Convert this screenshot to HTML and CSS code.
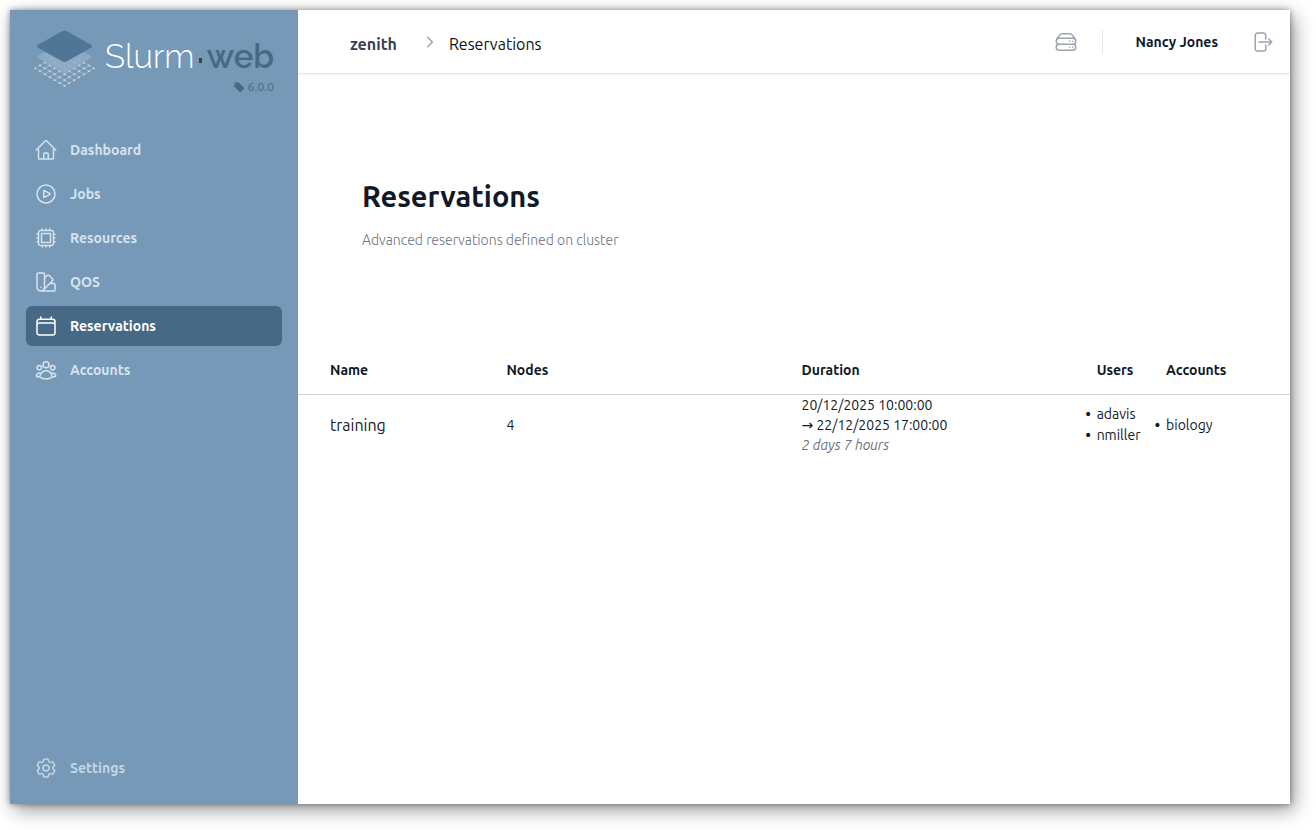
FILE: index.html
```html
<!DOCTYPE html>
<html lang="en">
<head>
<meta charset="utf-8">
<title>Slurm-web - Reservations</title>
<meta name="viewport" content="width=device-width, initial-scale=1">
<link rel="stylesheet" href="styles.css">
</head>
<body>
<div class="app">

  <aside class="sidebar">
    <div class="brand">
      <a class="logo" href="#" aria-label="Slurm-web">
        <svg class="logo-mark" viewBox="0 0 62 58" aria-hidden="true">
          <g stroke="#a3b7c8" stroke-width="0.9" fill="none">
            <path d="M1 39 31 57M6 36 36 54M11 33 41 51M16 30 46 48M21 27 51 45M26 24 56 42M31 21 61 39"/>
            <path d="M61 39 31 57M56 36 26 54M51 33 21 51M46 30 16 48M41 27 11 45M36 24 6 42M31 21 1 39"/>
          </g>
          <g stroke="#dddcd8" stroke-width="1.9" stroke-linecap="round" stroke-dasharray="0 5.831">
            <path d="M1 39 31 57.1M6 36 36 54.1M11 33 41 51.1M16 30 46 48.1M21 27 51 45.1M26 24 56 42.1M31 21 61 39.1"/>
          </g>
          <path d="M5 26 29 12q2-1 4 0L57 26q3 2 0 3L33 43q-2 1-4 0L5 29q-3-1 0-3z" fill="#90adc5" opacity=".85"/>
          <path d="M4 15 29 1q2-1 4 0L58 15q2 1 0 3L33 32q-2 1-4 0L4 18q-2-2 0-3z" fill="#507697"/>
        </svg>
        <span class="logo-text"><span class="logo-slurm">Slurm</span><span class="logo-dot"></span><span class="logo-web">web</span></span>
      </a>
      <div class="version">
        <svg viewBox="0 0 20 20" fill="currentColor" aria-hidden="true"><path fill-rule="evenodd" d="M4.5 2A2.5 2.5 0 0 0 2 4.5v3.879a2.5 2.5 0 0 0 .732 1.767l7.5 7.5a2.5 2.5 0 0 0 3.536 0l3.878-3.878a2.5 2.5 0 0 0 0-3.536l-7.5-7.5A2.5 2.5 0 0 0 8.38 2H4.5ZM5 6a1 1 0 1 0 0-2 1 1 0 0 0 0 2Z" clip-rule="evenodd"/></svg>
        6.0.0
      </div>
    </div>

    <nav class="menu">
      <ul>
        <li><a href="#">
          <svg class="icon" viewBox="0 0 24 24" aria-hidden="true"><path d="m2.25 12 8.954-8.955c.44-.439 1.152-.439 1.591 0L21.75 12M4.5 9.75v10.125c0 .621.504 1.125 1.125 1.125H9.75v-4.875c0-.621.504-1.125 1.125-1.125h2.25c.621 0 1.125.504 1.125 1.125V21h4.125c.621 0 1.125-.504 1.125-1.125V9.75M8.25 21h8.25"/></svg>
          Dashboard</a></li>
        <li><a href="#">
          <svg class="icon" viewBox="0 0 24 24" aria-hidden="true"><path d="M21 12a9 9 0 1 1-18 0 9 9 0 0 1 18 0Z"/><path d="M15.91 11.672a.375.375 0 0 1 0 .656l-5.603 3.113a.375.375 0 0 1-.557-.328V8.887c0-.286.307-.466.557-.327l5.603 3.112Z"/></svg>
          Jobs</a></li>
        <li><a href="#">
          <svg class="icon" viewBox="0 0 24 24" aria-hidden="true"><path d="M8.25 3v1.5M4.5 8.25H3m18 0h-1.5M4.5 12H3m18 0h-1.5m-15 3.75H3m18 0h-1.5M8.25 19.5V21M12 3v1.5m0 15V21m3.75-18v1.5m0 15V21m-9-1.5h10.5a2.25 2.25 0 0 0 2.25-2.25V6.75a2.25 2.25 0 0 0-2.25-2.25H6.75A2.25 2.25 0 0 0 4.5 6.75v10.5a2.25 2.25 0 0 0 2.25 2.25Zm.75-12h9v9h-9v-9Z"/></svg>
          Resources</a></li>
        <li><a href="#">
          <svg class="icon" viewBox="0 0 24 24" aria-hidden="true"><path d="M4.098 19.902a3.75 3.75 0 0 0 5.304 0l6.401-6.402M6.75 21A3.75 3.75 0 0 1 3 17.25V4.125C3 3.504 3.504 3 4.125 3h5.25c.621 0 1.125.504 1.125 1.125v4.072M6.75 21a3.75 3.75 0 0 0 3.75-3.75V8.197M6.75 21h13.125c.621 0 1.125-.504 1.125-1.125v-5.25c0-.621-.504-1.125-1.125-1.125h-4.072M10.5 8.197l2.88-2.88c.438-.439 1.15-.439 1.59 0l3.712 3.713c.44.44.44 1.152 0 1.59l-2.879 2.88M6.75 17.25h.008v.008H6.75v-.008Z"/></svg>
          QOS</a></li>
        <li><a class="active" href="#" aria-current="page">
          <svg class="icon" viewBox="0 0 24 24" aria-hidden="true"><path d="M6.75 3v2.25M17.25 3v2.25M3 18.75V7.5a2.25 2.25 0 0 1 2.25-2.25h13.5A2.25 2.25 0 0 1 21 7.5v11.25m-18 0A2.25 2.25 0 0 0 5.25 21h13.5A2.25 2.25 0 0 0 21 18.75m-18 0v-7.5A2.25 2.25 0 0 1 5.25 9h13.5A2.25 2.25 0 0 1 21 11.25v7.5"/></svg>
          Reservations</a></li>
        <li><a href="#">
          <svg class="icon" viewBox="0 0 24 24" aria-hidden="true"><path d="M18 18.72a9.094 9.094 0 0 0 3.741-.479 3 3 0 0 0-4.682-2.72m.94 3.198.001.031c0 .225-.012.447-.037.666A11.944 11.944 0 0 1 12 21c-2.17 0-4.207-.576-5.963-1.584A6.062 6.062 0 0 1 6 18.719m12 0a5.971 5.971 0 0 0-.941-3.197m0 0A5.995 5.995 0 0 0 12 12.75a5.995 5.995 0 0 0-5.058 2.772m0 0a3 3 0 0 0-4.681 2.72 8.986 8.986 0 0 0 3.74.477m.94-3.197a5.971 5.971 0 0 0-.94 3.197M15 6.75a3 3 0 1 1-6 0 3 3 0 0 1 6 0Zm6 3a2.25 2.25 0 1 1-4.5 0 2.25 2.25 0 0 1 4.5 0Zm-13.5 0a2.25 2.25 0 1 1-4.5 0 2.25 2.25 0 0 1 4.5 0Z"/></svg>
          Accounts</a></li>
      </ul>
      <a class="settings" href="#">
        <svg class="icon" viewBox="0 0 24 24" aria-hidden="true"><path d="M9.594 3.94c.09-.542.56-.94 1.11-.94h2.593c.55 0 1.02.398 1.11.94l.213 1.281c.063.374.313.686.645.87.074.04.147.083.22.127.325.196.72.257 1.075.124l1.217-.456a1.125 1.125 0 0 1 1.37.49l1.296 2.247a1.125 1.125 0 0 1-.26 1.431l-1.003.827c-.293.241-.438.613-.43.992a7.723 7.723 0 0 1 0 .255c-.008.378.137.75.43.991l1.004.827c.424.35.534.955.26 1.43l-1.298 2.247a1.125 1.125 0 0 1-1.369.491l-1.217-.456c-.355-.133-.75-.072-1.076.124a6.47 6.47 0 0 1-.22.128c-.331.183-.581.495-.644.869l-.213 1.281c-.09.543-.56.94-1.11.94h-2.594c-.55 0-1.019-.398-1.11-.94l-.213-1.281c-.062-.374-.312-.686-.644-.87a6.52 6.52 0 0 1-.22-.127c-.325-.196-.72-.257-1.076-.124l-1.217.456a1.125 1.125 0 0 1-1.369-.49l-1.297-2.247a1.125 1.125 0 0 1 .26-1.431l1.004-.827c.292-.24.437-.613.43-.991a6.932 6.932 0 0 1 0-.255c.007-.38-.138-.751-.43-.992l-1.004-.827a1.125 1.125 0 0 1-.26-1.43l1.297-2.247a1.125 1.125 0 0 1 1.37-.491l1.216.456c.356.133.751.072 1.076-.124.072-.044.146-.086.22-.128.332-.183.582-.495.644-.869l.214-1.28Z"/><path d="M15 12a3 3 0 1 1-6 0 3 3 0 0 1 6 0Z"/></svg>
        Settings</a>
    </nav>
  </aside>

  <div class="content">
    <header class="topbar">
      <nav class="breadcrumb" aria-label="Breadcrumb">
        <a class="cluster" href="#">zenith</a>
        <svg class="chevron" viewBox="0 0 20 20" aria-hidden="true"><path d="M7.7 5.3 12.3 10l-4.6 4.7"/></svg>
        <span>Reservations</span>
      </nav>
      <div class="user">
        <button type="button" aria-label="Clusters">
          <svg class="icon" viewBox="0 0 24 24" aria-hidden="true"><path d="M5.25 14.25h13.5m-13.5 0a3 3 0 0 1-3-3m3 3a3 3 0 1 0 0 6h13.5a3 3 0 1 0 0-6m-16.5-3a3 3 0 0 1 3-3h13.5a3 3 0 0 1 3 3m-19.5 0a4.5 4.5 0 0 1 .9-2.7L5.737 5.1a3.375 3.375 0 0 1 2.7-1.35h7.126c1.062 0 2.062.5 2.7 1.35l2.587 3.45a4.5 4.5 0 0 1 .9 2.7m0 0a3 3 0 0 1-3 3m0 3h.008v.008h-.008v-.008Zm0-6h.008v.008h-.008v-.008Zm-3 6h.008v.008h-.008v-.008Zm0-6h.008v.008h-.008v-.008Z"/></svg>
        </button>
        <span class="separator"></span>
        <span class="username">Nancy Jones</span>
        <button type="button" aria-label="Sign out">
          <svg class="icon" viewBox="0 0 24 24" aria-hidden="true"><path d="M15.75 9V5.25A2.25 2.25 0 0 0 13.5 3h-6a2.25 2.25 0 0 0-2.25 2.25v13.5A2.25 2.25 0 0 0 7.5 21h6a2.25 2.25 0 0 0 2.25-2.25V15m3 0 3-3m0 0-3-3m3 3H9"/></svg>
        </button>
      </div>
    </header>

    <main>
      <div class="heading">
        <h1>Reservations</h1>
        <p>Advanced reservations defined on cluster</p>
      </div>

      <table class="reservations">
        <colgroup>
          <col class="col-name"><col class="col-nodes"><col class="col-duration"><col class="col-users"><col>
        </colgroup>
        <thead>
          <tr>
            <th scope="col">Name</th>
            <th scope="col">Nodes</th>
            <th scope="col">Duration</th>
            <th scope="col">Users</th>
            <th scope="col">Accounts</th>
          </tr>
        </thead>
        <tbody>
          <tr>
            <td class="name">training</td>
            <td>4</td>
            <td>20/12/2025 10:00:00<br><span class="arrow">→</span> 22/12/2025 17:00:00<br><em>2 days 7 hours</em></td>
            <td><ul><li>adavis</li><li>nmiller</li></ul></td>
            <td><ul><li>biology</li></ul></td>
          </tr>
        </tbody>
      </table>
    </main>
  </div>

</div>
</body>
</html>
```
FILE: styles.css
```css
* { box-sizing: border-box; }

body {
  margin: 0;
  padding: 10px 26px 26px 10px;
  min-height: 100vh;
  display: flex;
  background: #fff;
  color: #111827;
  font-family: Ubuntu, "Open Sans", "Noto Sans", sans-serif;
  font-size: 14px;
  line-height: 20px;
}

ul { margin: 0; padding: 0; list-style: none; }
a { color: inherit; text-decoration: none; }

button {
  display: flex;
  padding: 0;
  border: 0;
  background: none;
  color: #9ca3af;
  cursor: pointer;
}

.app {
  flex: 1;
  display: flex;
  background: #fff;
  box-shadow: 0 0 6px rgba(0, 0, 0, .4), 4px 6px 18px rgba(0, 0, 0, .4);
}

.icon {
  width: 24px;
  height: 24px;
  flex: none;
  fill: none;
  stroke: currentColor;
  stroke-width: 1.5;
  stroke-linecap: round;
  stroke-linejoin: round;
}

/* Sidebar */

.sidebar {
  width: 288px;
  flex: none;
  display: flex;
  flex-direction: column;
  padding: 0 16px 16px;
  background: #7599b7;
}

.brand {
  height: 120px;
  padding: 20px 8px 0;
}

.logo {
  display: flex;
  align-items: flex-start;
  gap: 10px;
  height: 48px;
}

.logo-mark { width: 61px; height: 57px; flex: none; }

.logo-text {
  flex: 1;
  display: flex;
  align-items: center;
  justify-content: space-between;
  font-family: Raleway, Lato, sans-serif;
  font-size: 33px;
  line-height: 54px;
}

.logo-slurm { color: #fff; font-weight: 300; }
.logo-web { color: #476985; font-weight: 600; }
.logo-dot { width: 3px; height: 5px; margin-top: 6px; background: #444; }

.version {
  display: flex;
  align-items: center;
  justify-content: flex-end;
  gap: 3px;
  color: #476985;
  font-size: 12px;
  line-height: 18px;
}

.version svg { width: 12px; height: 12px; }

.menu {
  flex: 1;
  display: flex;
  flex-direction: column;
  justify-content: space-between;
}

.menu ul { display: grid; gap: 4px; }

.menu a {
  display: flex;
  align-items: center;
  gap: 12px;
  padding: 8px;
  border-radius: 6px;
  color: #d6e3ee;
  font-weight: 600;
  line-height: 24px;
}

.menu a.active { background: #476985; color: #fff; }
.menu a.settings { color: #c5d6e4; }

/* Top bar */

.content { flex: 1; min-width: 0; }

.topbar {
  height: 64px;
  display: flex;
  align-items: center;
  justify-content: space-between;
  padding: 0 16px 0 52px;
  border-bottom: 1px solid #e5e7eb;
  box-shadow: 0 1px 2px rgba(0, 0, 0, .05);
}

.breadcrumb {
  display: flex;
  align-items: center;
  padding-top: 4px;
  color: #111;
  font-size: 16px;
  line-height: 28px;
}

.cluster { color: #374151; font-weight: 600; }

.chevron {
  width: 20px;
  height: 20px;
  margin: 0 9px 4px 23px;
  fill: none;
  stroke: #9ca3af;
  stroke-width: 1.5;
  stroke-linecap: round;
}

.user { display: flex; align-items: center; }
.separator { width: 1px; height: 24px; margin: 0 32px 0 24px; background: #e5e7eb; }
.username { margin-right: 32px; font-weight: 600; }

/* Page */

.heading { padding: 104px 64px 100px; }

h1 {
  margin: 0 0 16px;
  font-size: 29px;
  font-weight: 600;
  line-height: 36px;
}

.heading p { margin: 0; color: #6b7280; font-weight: 300; }

.reservations {
  width: 100%;
  table-layout: fixed;
  border-collapse: collapse;
}

.col-name { width: 19.8%; }
.col-nodes, .col-duration { width: 29.75%; }
.col-users { width: 7%; }

th, td {
  padding: 0 0 0 12px;
  text-align: left;
  font-weight: 400;
}

th:first-child, td:first-child { padding-left: 32px; }

th {
  padding-top: 10px;
  padding-bottom: 14px;
  border-bottom: 1px solid #d1d5db;
  font-weight: 600;
}

td.name { font-size: 16px; }
td em { color: #6b7280; }
td li { line-height: 21px; }
td li::marker { content: "• "; font-family: "DejaVu Sans", sans-serif; }

.arrow { font-family: "DejaVu Sans", sans-serif; }
```
